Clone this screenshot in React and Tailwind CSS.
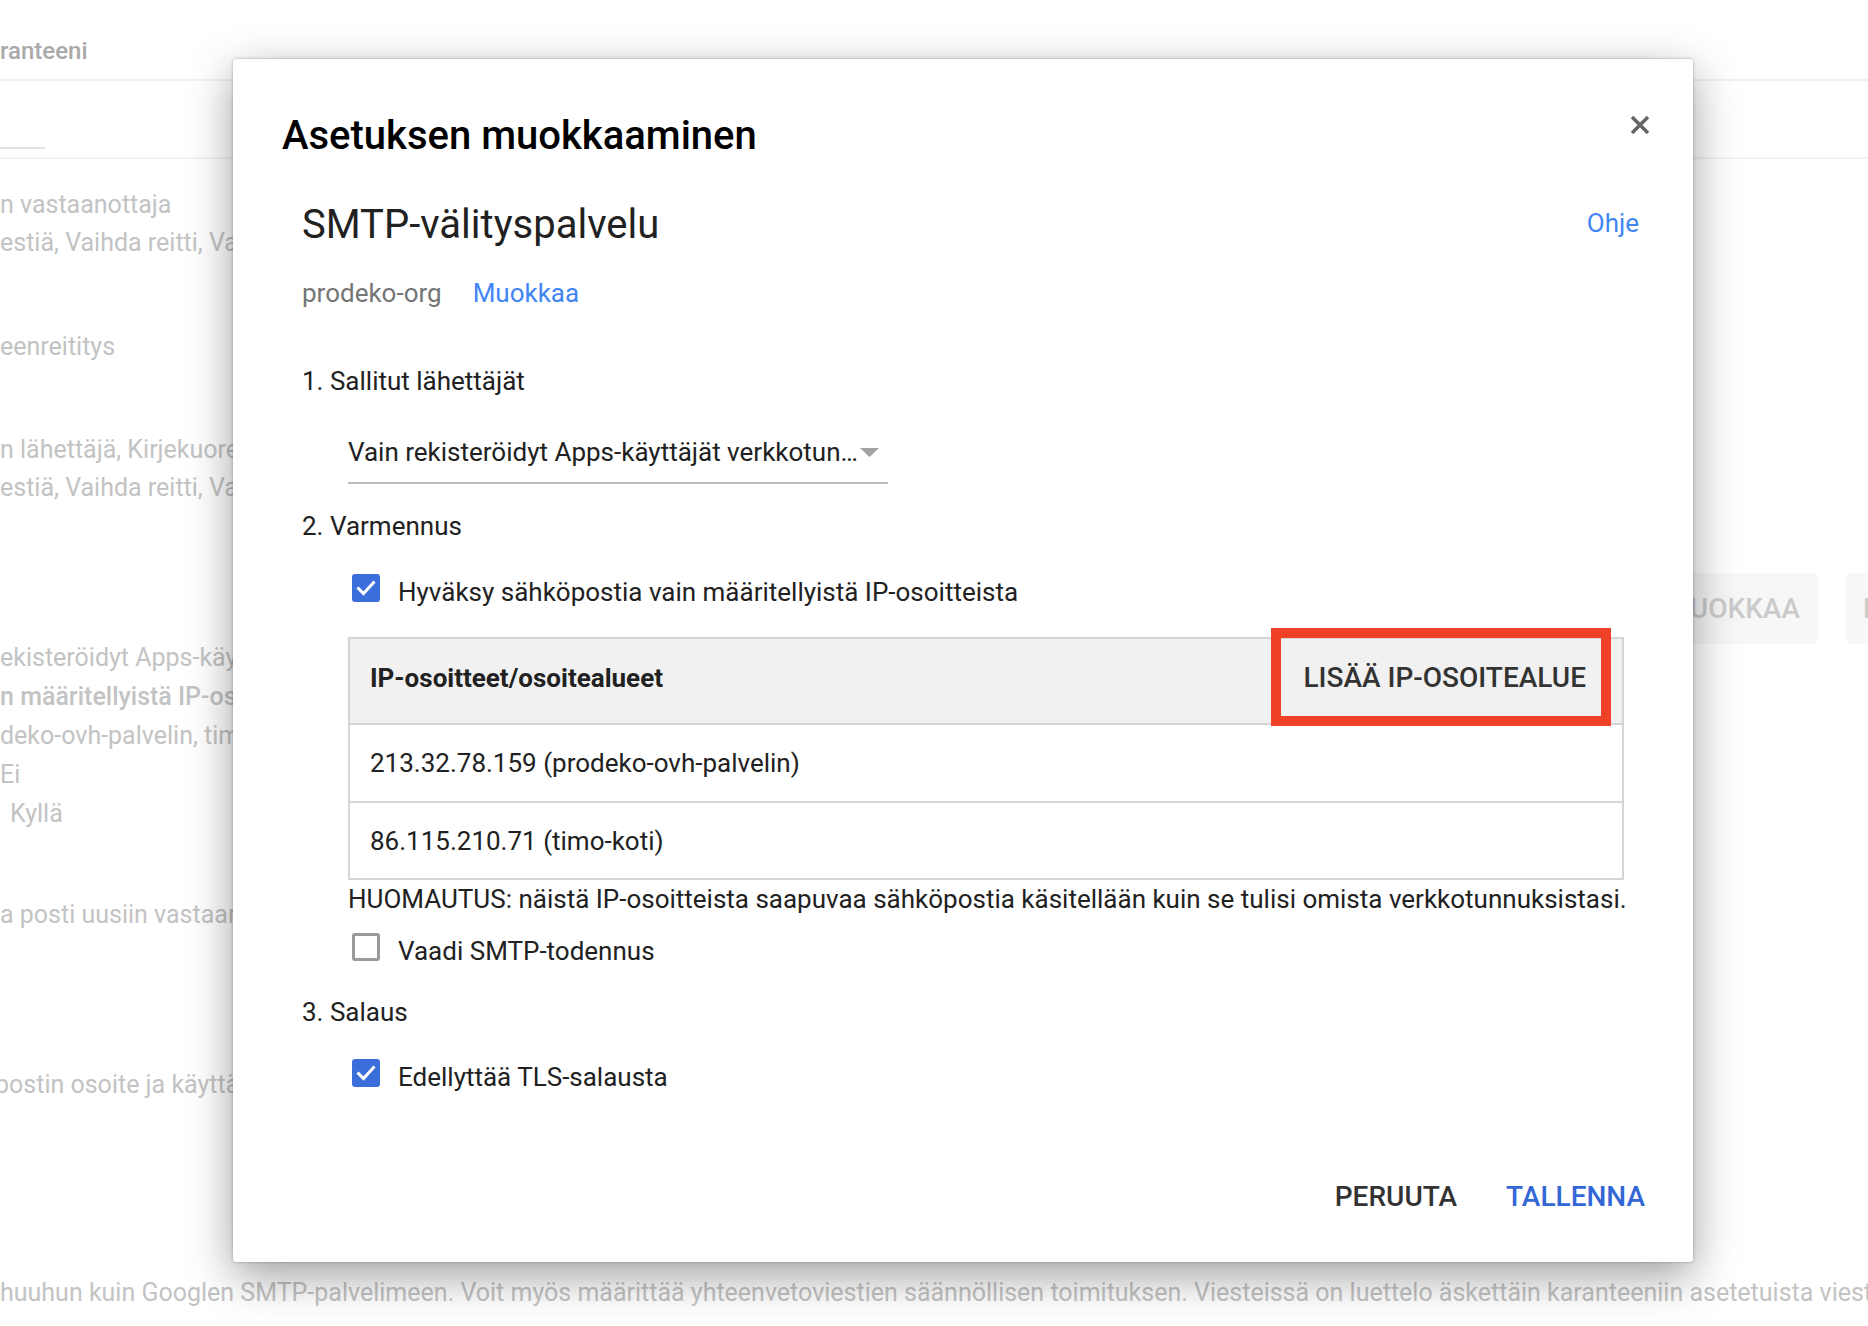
import React from "react";

const CheckBox = ({ checked }) =>
  checked ? (
    <svg width="28" height="28" viewBox="0 0 28 28" className="shrink-0">
      <rect x="0" y="0" width="28" height="28" rx="3" fill="#3c6edb" />
      <path d="M6.5 14.5 L11.5 19.5 L21.5 8.5" fill="none" stroke="#fff" strokeWidth="3" strokeLinecap="square" />
    </svg>
  ) : (
    <span className="block w-[28px] h-[28px] shrink-0 rounded-[3px] border-[3px] border-[#9a9a9a]" />
  );

const App = () => {
  return (
    <div className="relative w-[1868px] h-[1326px] overflow-hidden bg-white font-[Roboto,sans-serif]">
      {/* page behind the dialog */}
      <div className="flex flex-col text-[25px] text-[#c3c3c3]">
        <div className="h-[81px] border-b-2 border-[#f0f0f0] pt-[37px]">
          <span className="block text-[24px] leading-[28px] font-medium text-[#a9a9a9] whitespace-nowrap">ranteeni</span>
        </div>
        <div className="h-[78px] flex flex-col justify-end border-b-2 border-[#f2f2f2]">
          <div className="w-[45px] h-[2px] bg-[#e2e2e2] mb-[8px]" />
        </div>

        <div className="flex">
          <div className="flex-1 min-w-0 overflow-hidden whitespace-nowrap">
            <div className="mt-[27px] leading-[38px]">
              <p>n vastaanottaja</p>
              <p>estiä, Vaihda reitti, Vaihda vastaanottaja</p>
            </div>
            <p className="mt-[66px] leading-[38px]">eenreititys</p>
            <div className="mt-[65px] leading-[38px]">
              <p>n lähettäjä, Kirjekuoren vastaanottaja</p>
              <p>estiä, Vaihda reitti, Vaihda vastaanottaja</p>
            </div>
            <div className="mt-[131px] leading-[39px]">
              <p>ekisteröidyt Apps-käyttäjät</p>
              <p className="font-medium">n määritellyistä IP-osoitteista</p>
              <p>deko-ovh-palvelin, timo-koti</p>
              <p>Ei</p>
              <p className="pl-[10px]">Kyllä</p>
            </div>
            <p className="mt-[63px] leading-[38px]">a posti uusiin vastaanottajiin</p>
            <p className="mt-[132px] leading-[38px] ml-[-5px]">postin osoite ja käyttäjätunnus</p>
          </div>
          <div className="shrink-0 flex gap-[28px] mt-[414px] mr-[-128px] text-[28px] font-medium text-[#cbcbcb]">
            <div className="w-[170px] h-[71px] rounded-[6px] bg-[#f7f7f7] flex items-center justify-end pr-[18px]">MUOKKAA</div>
            <div className="w-[150px] h-[71px] rounded-[6px] bg-[#f7f7f7] flex items-center pl-[17px]">POISTA</div>
          </div>
        </div>

        <p className="mt-[170px] leading-[38px] whitespace-nowrap">
          huuhun kuin Googlen SMTP-palvelimeen. Voit myös määrittää yhteenvetoviestien säännöllisen toimituksen. Viesteissä on luettelo äskettäin karanteeniin asetetuista viesteistä.
        </p>
      </div>

      {/* dialog */}
      <div className="absolute left-[233px] top-[59px] w-[1460px] h-[1203px] bg-white rounded-[3px] shadow-[0_14px_45px_rgba(0,0,0,0.38),0_0_3px_rgba(0,0,0,0.3)] flex flex-col pt-[53px] pb-[49px] text-[#212121]">
        <div className="flex items-start justify-between pl-[49px] pr-[43px]">
          <h1 className="text-[40px] leading-[48px] font-medium text-black">Asetuksen muokkaaminen</h1>
          <button className="mt-[3px]">
            <svg width="20" height="20" viewBox="0 0 20 20">
              <path d="M2 2 L18 18 M18 2 L2 18" stroke="#646464" strokeWidth="3.5" />
            </svg>
          </button>
        </div>

        <div className="pl-[69px] pr-[54px] text-[26px] leading-[32px]">
          <div className="mt-[42px] flex items-start justify-between">
            <h2 className="text-[40px] leading-[46px]">SMTP-välityspalvelu</h2>
            <a className="mt-[5px] text-[#4285f4]">Ohje</a>
          </div>
          <div className="mt-[29px] flex gap-[31px]">
            <span className="text-[#757575]">prodeko-org</span>
            <a className="text-[#4285f4]">Muokkaa</a>
          </div>

          <p className="mt-[56px]">1. Sallitut lähettäjät</p>
          <div className="mt-[39px] ml-[46px] w-[540px] flex items-center pb-[14px] border-b-2 border-[#bdbdbd]">
            <span className="whitespace-nowrap">Vain rekisteröidyt Apps-käyttäjät verkkotun…</span>
            <svg width="19" height="9" viewBox="0 0 19 9" className="ml-[2px] shrink-0">
              <path d="M0 0 L19 0 L9.5 9 Z" fill="#a3a3a3" />
            </svg>
          </div>

          <p className="mt-[26px]">2. Varmennus</p>
          <div className="mt-[32px] ml-[50px] flex items-start gap-[18px]">
            <CheckBox checked />
            <span className="mt-[2px]">Hyväksy sähköpostia vain määritellyistä IP-osoitteista</span>
          </div>

          <div className="mt-[29px] ml-[46px] w-[1276px] border-2 border-[#d5d5d5]">
            <div className="h-[84px] bg-[#f1f1f1] flex items-center justify-between pl-[20px] pr-[36px] pb-[6px]">
              <span className="font-bold">IP-osoitteet/osoitealueet</span>
              <button className="relative h-full flex items-center text-[28px] font-medium text-[#333333]">
                LISÄÄ IP-OSOITEALUE
                <span className="absolute left-[-32px] right-[-25px] top-[-11px] bottom-[-9px] border-[10px] border-[#ee4127]" />
              </button>
            </div>
            <div className="h-[78px] border-t-2 border-[#d5d5d5] flex items-center pl-[20px]">213.32.78.159 (prodeko-ovh-palvelin)</div>
            <div className="h-[77px] border-t-2 border-[#d5d5d5] flex items-center pl-[20px]">86.115.210.71 (timo-koti)</div>
          </div>
          <p className="mt-[3px] ml-[46px] whitespace-nowrap">
            HUOMAUTUS: näistä IP-osoitteista saapuvaa sähköpostia käsitellään kuin se tulisi omista verkkotunnuksistasi.
          </p>
          <div className="mt-[18px] ml-[50px] flex items-start gap-[18px]">
            <CheckBox />
            <span className="mt-[2px]">Vaadi SMTP-todennus</span>
          </div>

          <p className="mt-[29px]">3. Salaus</p>
          <div className="mt-[31px] ml-[50px] flex items-start gap-[18px]">
            <CheckBox checked />
            <span className="mt-[2px]">Edellyttää TLS-salausta</span>
          </div>
        </div>

        <div className="mt-auto flex justify-end gap-[49px] pr-[48px] text-[28px] leading-[32px] font-medium">
          <button className="text-[#333333]">PERUUTA</button>
          <button className="text-[#3367d6]">TALLENNA</button>
        </div>
      </div>
    </div>
  );
};

export default App;
